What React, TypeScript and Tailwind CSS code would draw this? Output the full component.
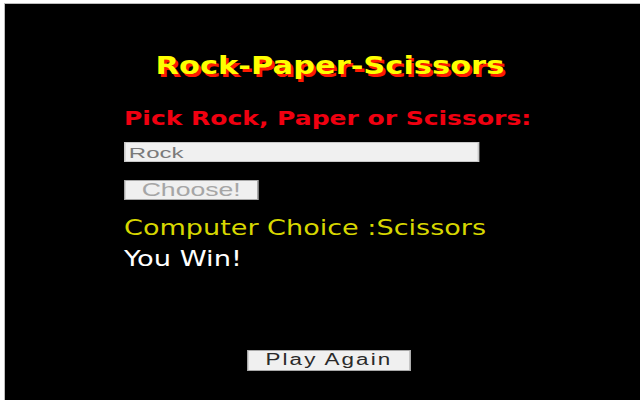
import { useState } from "react";

const choices = ["Rock", "Paper", "Scissors"];

function outcome(player: string, computer: string) {
  if (player === computer) return "It's a Tie!";
  const beats: Record<string, string> = { Rock: "Scissors", Paper: "Rock", Scissors: "Paper" };
  return beats[player] === computer ? "You Win!" : "You Lose!";
}

export default function App() {
  const [pick, setPick] = useState("Rock");
  const [computer, setComputer] = useState<string | null>("Scissors");

  const choose = () => setComputer(choices[Math.floor(Math.random() * 3)]);
  const reset = () => {
    setPick("");
    setComputer(null);
  };

  return (
    <div className="min-h-screen h-[400px] bg-white pl-[4px] pt-[3px] overflow-hidden">
      <div className="h-full bg-black border-l border-t border-[#bdbdbd] pt-[45px]">
        <div className="ml-[119px] w-[412px] flex flex-col">
          <h1 className="text-center text-[25px] leading-[34px] font-bold text-[#ffff00] font-['DejaVu_Sans',sans-serif] [text-shadow:2px_3px_0_#ff1a00]">
            <span className="inline-block scale-x-[1.22]">Rock-Paper-Scissors</span>
          </h1>

          <p className="mt-[23px] text-[20px] leading-[24px] font-bold text-[#f00010] font-['DejaVu_Sans',sans-serif]">
            <span className="inline-block origin-left scale-x-[1.25]">Pick Rock, Paper or Scissors:</span>
          </p>

          <input
            value={pick}
            onChange={(e) => setPick(e.target.value)}
            className="mt-[12px] w-[222px] h-[20px] origin-left scale-x-[1.6] bg-[#f0f0f0] border border-[#c8c8c8] px-[2px] text-[15px] leading-[18px] text-[#7a7a7a] font-['Liberation_Sans',Arial,sans-serif] outline-none"
          />

          <div className="mt-[16px]">
            <button
              onClick={choose}
              className="w-[96px] h-[20px] origin-left scale-x-[1.4] bg-[#f0f0f0] border border-[#a8a8a8] text-[19px] leading-[18px] text-[#a6a6a6] font-['Liberation_Sans',Arial,sans-serif]"
            >
              Choose!
            </button>
          </div>

          {computer && (
            <>
              <p className="mt-[13px] text-[22px] leading-[26px] text-[#d7d700] font-['DejaVu_Sans',sans-serif]">
                <span className="inline-block origin-left scale-x-[1.23]">Computer Choice :{computer}</span>
              </p>
              <p className="mt-[5px] text-[22px] leading-[26px] text-white font-['DejaVu_Sans',sans-serif]">
                <span className="inline-block origin-left scale-x-[1.24]">{outcome(pick, computer)}</span>
              </p>
            </>
          )}
        </div>

        <div className="mt-[75px] ml-[242px]">
          <button
            onClick={reset}
            className="w-[117px] h-[21px] origin-left scale-x-[1.4] bg-[#f0f0f0] border border-[#a8a8a8] text-[16px] leading-[18px] tracking-[1.5px] text-[#2a2a2a] font-['Liberation_Sans',Arial,sans-serif]"
          >
            Play Again
          </button>
        </div>
      </div>
    </div>
  );
}
